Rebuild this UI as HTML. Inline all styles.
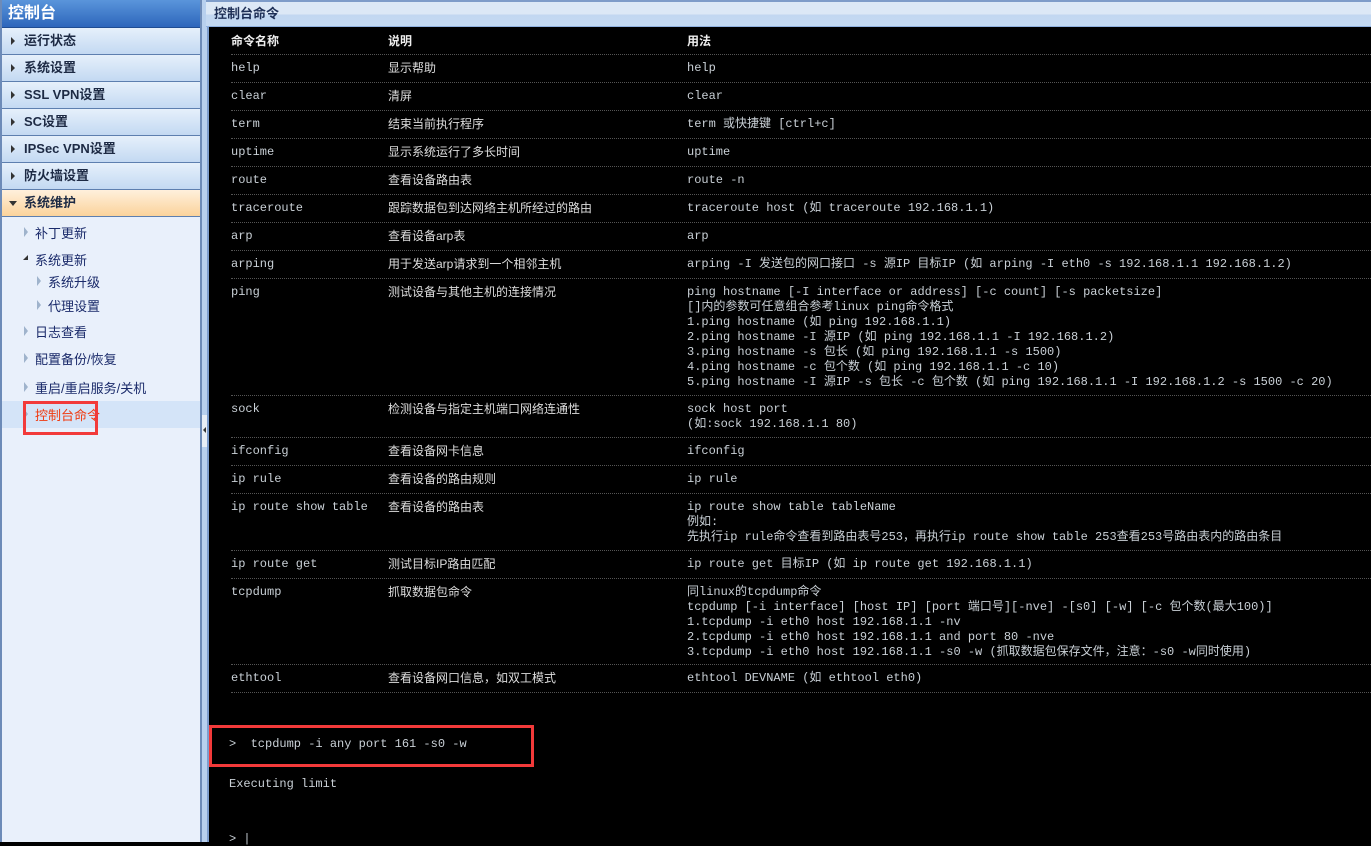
<!DOCTYPE html>
<html><head><meta charset="utf-8">
<style>
*{margin:0;padding:0;box-sizing:border-box}
body{width:1371px;height:842px;overflow:hidden;background:#000;font-family:"Liberation Sans","Noto Sans CJK SC",sans-serif;font-size:12px;position:relative}
#side{position:absolute;left:0;top:0;width:202px;height:842px;background:#e9f0fb;border-left:2px solid #6d8bb8;border-right:2px solid #6d8bb8}
#side .title{height:28px;background:linear-gradient(#5a95db,#2d66bb);color:#fff;font-weight:bold;font-size:16px;line-height:28px;padding-left:6px;border-bottom:1px solid #1f4c92}
.m{height:27px;border-bottom:1px solid #5d7faf;background:linear-gradient(#e6f0fb,#c3d9f2);font-weight:bold;color:#1d2a44;font-size:13px;line-height:26px;padding-left:22px;position:relative}
.m:before{content:"";position:absolute;left:9px;top:9px;border-left:4px solid #333;border-top:4px solid transparent;border-bottom:4px solid transparent}
.m.open{background:linear-gradient(#fff0dc,#fbd39b)}
.m.open:before{left:7px;top:11px;border-top:5px solid #333;border-left:4px solid transparent;border-right:4px solid transparent;border-bottom:0}
.s{position:absolute;color:#1a2a6a;font-size:13px}
.s i{position:absolute;left:-11px;top:4px;border-left:4px solid #9fb3cc;border-top:5px solid transparent;border-bottom:5px solid transparent}
#strip{position:absolute;left:202px;top:0;width:7px;height:842px;background:#b8d0ee;border-right:2px solid #7d9dcd}
#head{position:absolute;left:206px;top:0;width:1165px;height:27px;background:linear-gradient(#dce8f6 0,#dce8f6 12px,#c2d7f1 13px,#c5daf2 26px);border-top:2px solid #7e9cc9;border-bottom:1px solid #8fb0e0;color:#1d2e55;font-weight:bold;font-size:13px;line-height:24px;padding-left:8px}
.mono{font-family:"Liberation Mono","Noto Sans CJK SC",monospace}
.row{position:absolute;left:231px;right:0;border-bottom:1px dotted #555;color:#c9d0d6}
.row div{position:absolute;top:0;line-height:15px;white-space:pre}
.c1{left:0}.c2{left:157px;font-family:"Liberation Sans","Noto Sans CJK SC",sans-serif;color:#ddd}.c3{left:456px}
.hd div{font-weight:bold;color:#eee;font-family:"Liberation Sans","Noto Sans CJK SC",sans-serif}
</style></head><body>
<div id="side">
<div class="title">控制台</div>
<div class="m">运行状态</div>
<div class="m">系统设置</div>
<div class="m">SSL VPN设置</div>
<div class="m">SC设置</div>
<div class="m">IPSec VPN设置</div>
<div class="m">防火墙设置</div>
<div class="m open">系统维护</div>
<div class="s" style="left:33px;top:223px"><i></i>补丁更新</div>
<div class="s" style="left:33px;top:250px"><i style="border:0;width:0;height:0;border-bottom:5px solid #333;border-left:5px solid transparent;top:5px;left:-12px"></i>系统更新</div>
<div class="s" style="left:46px;top:272px"><i></i>系统升级</div>
<div class="s" style="left:46px;top:296px"><i></i>代理设置</div>
<div class="s" style="left:33px;top:322px"><i></i>日志查看</div>
<div class="s" style="left:33px;top:349px"><i></i>配置备份/恢复</div>
<div class="s" style="left:33px;top:378px"><i></i>重启/重启服务/关机</div>
<div style="position:absolute;left:0;top:401px;width:198px;height:27px;background:#d4e4f8"></div>
<div class="s" style="left:33px;top:405px;color:#f03a10"><i></i>控制台命令</div>
<div style="position:absolute;left:21px;top:401px;width:75px;height:34px;border:3px solid #f23a3a"></div>
</div>
<div id="strip"><div style="position:absolute;left:0;top:415px;width:5px;height:32px;background:#e8eef6"></div><div style="position:absolute;left:1px;top:427px;border-right:3px solid #333;border-top:3px solid transparent;border-bottom:3px solid transparent"></div></div>
<div id="head">控制台命令</div>

<div class="mono">
<div class="row hd" style="top:27px;height:28px"><div class="c1" style="top:7px;font-size:12px">命令名称</div><div class="c2" style="top:7px">说明</div><div class="c3" style="top:7px">用法</div></div>
<div class="row" style="top:55px;height:28px"><div class="c1" style="top:6px">help</div><div class="c2" style="top:6px">显示帮助</div><div class="c3" style="top:6px">help</div></div>
<div class="row" style="top:83px;height:28px"><div class="c1" style="top:6px">clear</div><div class="c2" style="top:6px">清屏</div><div class="c3" style="top:6px">clear</div></div>
<div class="row" style="top:111px;height:28px"><div class="c1" style="top:6px">term</div><div class="c2" style="top:6px">结束当前执行程序</div><div class="c3" style="top:6px">term 或快捷键 [ctrl+c]</div></div>
<div class="row" style="top:139px;height:28px"><div class="c1" style="top:6px">uptime</div><div class="c2" style="top:6px">显示系统运行了多长时间</div><div class="c3" style="top:6px">uptime</div></div>
<div class="row" style="top:167px;height:28px"><div class="c1" style="top:6px">route</div><div class="c2" style="top:6px">查看设备路由表</div><div class="c3" style="top:6px">route -n</div></div>
<div class="row" style="top:195px;height:28px"><div class="c1" style="top:6px">traceroute</div><div class="c2" style="top:6px">跟踪数据包到达网络主机所经过的路由</div><div class="c3" style="top:6px">traceroute host (如 traceroute 192.168.1.1)</div></div>
<div class="row" style="top:223px;height:28px"><div class="c1" style="top:6px">arp</div><div class="c2" style="top:6px">查看设备arp表</div><div class="c3" style="top:6px">arp</div></div>
<div class="row" style="top:251px;height:28px"><div class="c1" style="top:6px">arping</div><div class="c2" style="top:6px">用于发送arp请求到一个相邻主机</div><div class="c3" style="top:6px">arping -I 发送包的网口接口 -s 源IP 目标IP (如 arping -I eth0 -s 192.168.1.1 192.168.1.2)</div></div>
<div class="row" style="top:279px;height:117px"><div class="c1" style="top:6px">ping</div><div class="c2" style="top:6px">测试设备与其他主机的连接情况</div><div class="c3" style="top:6px">ping hostname [-I interface or address] [-c count] [-s packetsize]
[]内的参数可任意组合参考linux ping命令格式
1.ping hostname (如 ping 192.168.1.1)
2.ping hostname -I 源IP (如 ping 192.168.1.1 -I 192.168.1.2)
3.ping hostname -s 包长 (如 ping 192.168.1.1 -s 1500)
4.ping hostname -c 包个数 (如 ping 192.168.1.1 -c 10)
5.ping hostname -I 源IP -s 包长 -c 包个数 (如 ping 192.168.1.1 -I 192.168.1.2 -s 1500 -c 20)</div></div>
<div class="row" style="top:396px;height:42px"><div class="c1" style="top:6px">sock</div><div class="c2" style="top:6px">检测设备与指定主机端口网络连通性</div><div class="c3" style="top:6px">sock host port
(如:sock 192.168.1.1 80)</div></div>
<div class="row" style="top:438px;height:28px"><div class="c1" style="top:6px">ifconfig</div><div class="c2" style="top:6px">查看设备网卡信息</div><div class="c3" style="top:6px">ifconfig</div></div>
<div class="row" style="top:466px;height:28px"><div class="c1" style="top:6px">ip rule</div><div class="c2" style="top:6px">查看设备的路由规则</div><div class="c3" style="top:6px">ip rule</div></div>
<div class="row" style="top:494px;height:57px"><div class="c1" style="top:6px">ip route show table</div><div class="c2" style="top:6px">查看设备的路由表</div><div class="c3" style="top:6px">ip route show table tableName
例如:
先执行ip rule命令查看到路由表号253，再执行ip route show table 253查看253号路由表内的路由条目</div></div>
<div class="row" style="top:551px;height:28px"><div class="c1" style="top:6px">ip route get</div><div class="c2" style="top:6px">测试目标IP路由匹配</div><div class="c3" style="top:6px">ip route get 目标IP (如 ip route get 192.168.1.1)</div></div>
<div class="row" style="top:579px;height:86px"><div class="c1" style="top:6px">tcpdump</div><div class="c2" style="top:6px">抓取数据包命令</div><div class="c3" style="top:6px">同linux的tcpdump命令
tcpdump [-i interface] [host IP] [port 端口号][-nve] -[s0] [-w] [-c 包个数(最大100)]
1.tcpdump -i eth0 host 192.168.1.1 -nv
2.tcpdump -i eth0 host 192.168.1.1 and port 80 -nve
3.tcpdump -i eth0 host 192.168.1.1 -s0 -w (抓取数据包保存文件，注意：-s0 -w同时使用)</div></div>
<div class="row" style="top:665px;height:28px"><div class="c1" style="top:6px">ethtool</div><div class="c2" style="top:6px">查看设备网口信息，如双工模式</div><div class="c3" style="top:6px">ethtool DEVNAME (如 ethtool eth0)</div></div>

<div style="position:absolute;left:209px;top:725px;width:325px;height:42px;border:3px solid #f23a3a"></div>
<div style="position:absolute;left:229px;top:737px;color:#c9d0d6;white-space:pre">&gt;  tcpdump -i any port 161 -s0 -w</div>
<div style="position:absolute;left:229px;top:777px;color:#c9d0d6">Executing limit</div>
<div style="position:absolute;left:229px;top:832px;color:#c9d0d6;white-space:pre">&gt; |</div>
</div>
</body></html>
